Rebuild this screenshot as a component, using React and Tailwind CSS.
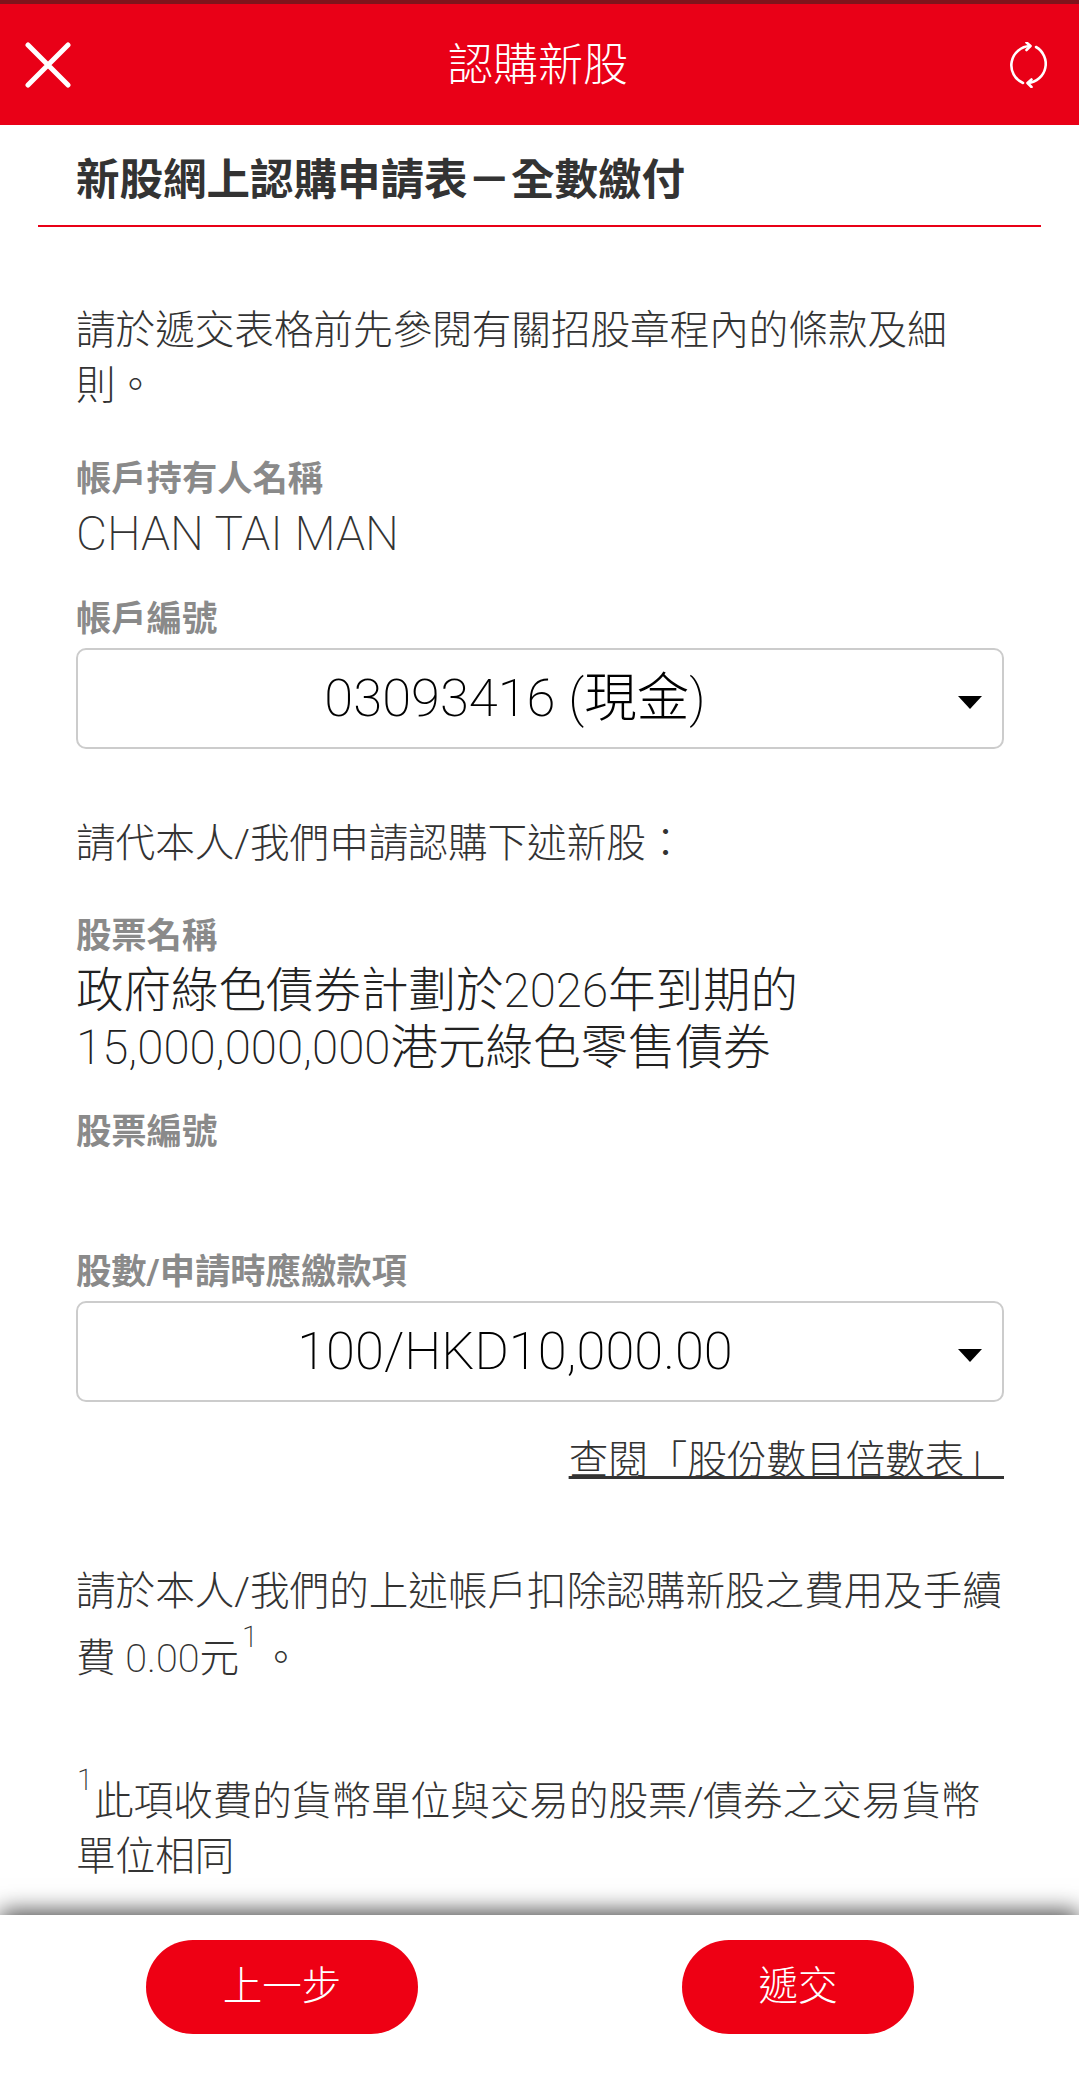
const font = { fontFamily: '"Roboto","Noto Sans CJK TC",sans-serif' };

function Label({ children, className = "" }) {
  return <div className={"text-[35.3px] leading-[42px] font-bold text-[#8a8a8a] " + className}>{children}</div>;
}

function L({ children }) {
  return <span className="font-extralight">{children}</span>;
}

function Select({ children, className = "" }) {
  return (
    <div className={"relative h-[101px] w-[928px] rounded-[10px] border-2 border-[#cccccc] bg-white flex items-center justify-center pr-[50px] text-[52.500px] font-light text-[#000000] " + className}>
      <span>{children}</span>
      <svg className="absolute right-[20px] top-[46px]" width="24" height="13" viewBox="0 0 24 13"><path d="M0 0H24L12 13Z" fill="#000" /></svg>
    </div>
  );
}

function Sup({ className = "" }) {
  return <sup className={"static align-[25px] text-[29px] leading-[36px] font-extralight " + className}>1</sup>;
}

export default function App() {
  return (
    <div style={font} className="w-[1079px] h-[2073px] flex flex-col bg-white overflow-hidden">
      <header className="h-[125px] shrink-0 border-t-[4px] border-[#7f141c] bg-[#e90017] flex items-center justify-between pl-[25px] pr-[29px]">
        <svg width="46" height="46" viewBox="0 0 46 46"><path d="M3 3L43 43M43 3L3 43" stroke="#fff" strokeWidth="5" strokeLinecap="round" /></svg>
        <h1 className="text-[45px] font-light text-white leading-none pt-[2px] -ml-[5px]">認購新股</h1>
        <svg width="40" height="46" viewBox="0 0 40 46" fill="none" stroke="#fff" strokeWidth="2.6" strokeLinecap="round" strokeLinejoin="round">
          <path d="M13 41A19.300 19.300 0 0 1 20 4" />
          <path d="M16.500 .5L20.500 4L16.500 8" />
          <path d="M26 5A19.300 19.300 0 0 1 18 41" />
          <path d="M21.500 37.500L17.500 41L21.500 45" />
        </svg>
      </header>

      <main className="flex-1 min-h-0 overflow-hidden">
        <div className="mx-[38px] h-[102px] border-b-2 border-[#e90017] pl-[38px] pt-[30px]">
          <h2 className="text-[43.5px] leading-[52px] font-bold text-[#333333]">新股網上認購申請表－全數繳付</h2>
        </div>

        <div className="px-[76px]">
          <p className="mt-[76px] text-[39.6px] leading-[55px] font-light text-[#333333]">請於遞交表格前先參閱有關招股章程內的條款及細則。</p>

          <Label className="mt-[45px]">帳戶持有人名稱</Label>
          <div className="mt-[6px] text-[47.8px] leading-[56px] font-extralight text-[#333333]">CHAN TAI MAN</div>

          <Label className="mt-[36px]">帳戶編號</Label>
          <Select className="mt-[8px]"><L>03093416 (</L>現金<L>)</L></Select>

          <p className="mt-[68px] text-[39.6px] leading-[54px] font-light text-[#333333]">請代本人/我們申請認購下述新股：</p>

          <Label className="mt-[44px]">股票名稱</Label>
          <div className="mt-[6px] text-[47.5px] leading-[57px] font-light text-[#222222]">政府綠色債券計劃於<L>2026</L>年到期的<br /><L>15,000,000,000</L>港元綠色零售債券</div>

          <Label className="mt-[34px]">股票編號</Label>

          <Label className="mt-[98px]">股數/申請時應繳款項</Label>
          <Select className="mt-[8px]"><L>100/HKD10,000.00</L></Select>

          <div className="mt-[32px] -mr-[1px] text-right text-[39.6px] leading-[54px] font-light text-[#333333] underline">查閱「股份數目倍數表」</div>

          <p className="mt-[76px] text-[39.6px] leading-[55px] font-light text-[#333333]">請於本人/我們的上述帳戶扣除認購新股之費用及手續費 <L>0.00</L>元<Sup className="px-[3px]" />。</p>

          <p className="mt-[76px] text-[39.6px] leading-[55px] font-light text-[#333333]"><Sup className="pl-[1px] pr-[1px]" />此項收費的貨幣單位與交易的股票/債券之交易貨幣單位相同</p>
        </div>
      </main>

      <footer className="h-[158px] shrink-0 bg-white shadow-[0_-4px_22px_rgba(0,0,0,0.7)] relative flex items-start pt-[25px] pl-[146px]">
        <button className="w-[272px] h-[94px] rounded-full bg-[#ee0014] text-white text-[39.6px] font-light">上一步</button>
        <button className="ml-[264px] w-[232px] h-[94px] rounded-full bg-[#ee0014] text-white text-[39.6px] font-light">遞交</button>
      </footer>
    </div>
  );
}
